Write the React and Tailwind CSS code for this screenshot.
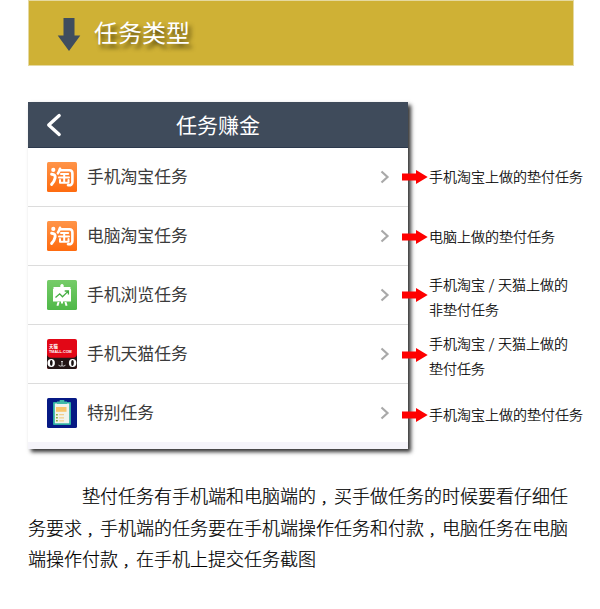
const TaobaoIcon = () => (
  <svg width="30" height="30" viewBox="0 0 30 30">
    <defs>
      <linearGradient id="orange" x1="0" y1="0" x2="0" y2="1">
        <stop offset="0" stopColor="#ff9448" />
        <stop offset="1" stopColor="#fe6b10" />
      </linearGradient>
    </defs>
    <rect width="30" height="30" rx="1.5" fill="url(#orange)" />
    <g fill="none" stroke="#fff" strokeLinecap="round" strokeLinejoin="round">
      <circle cx="6.3" cy="7.9" r="1" strokeWidth="2.2" />
      <path d="M4.6 12.2Q8.8 12.4 8.1 16Q7.4 19.6 4.6 22.4" strokeWidth="2.9" />
      <path d="M13 6.8Q12.2 9.6 10.9 11.4" strokeWidth="2.6" />
      <path d="M13 8.2H22.5Q25.4 8.2 25.4 11.5V20Q25.4 23.6 21 23.2" strokeWidth="2.6" />
      <path d="M14 11.9H21.2M12 15.4H22M17.2 11.9V20.6M13 17.9V20.8H21.5V17.9" strokeWidth="2" />
    </g>
  </svg>
);

const BrowseIcon = () => (
  <svg width="30" height="30" viewBox="0 0 30 30">
    <defs>
      <linearGradient id="green" x1="0" y1="0" x2="0" y2="1">
        <stop offset="0" stopColor="#76cc69" />
        <stop offset="1" stopColor="#4fb848" />
      </linearGradient>
    </defs>
    <rect width="30" height="30" rx="1.5" fill="url(#green)" />
    <path d="M13.3 7V5.2Q15 2.8 16.7 5.2V7H23.5V9H24V21.4H6V9H6.5V7Z" fill="#fff" />
    <path d="M11.6 22L10.4 25.8M18.4 22L19.6 25.8M15 21V23.5" stroke="#fff" strokeWidth="2" />
    <path d="M8.5 17.5L12.7 13.8L15.5 16.8L21 11.4M17.7 11H21.4V14.6" fill="none" stroke="#45ae43" strokeWidth="1.3" />
  </svg>
);

const TmallIcon = () => (
  <svg width="30" height="30" viewBox="0 0 30 30">
    <rect width="30" height="30" rx="2" fill="#e20716" />
    <path d="M0 15Q0.5 18.8 4 18.8H26Q29.5 18.8 30 15V28Q30 30 28 30H2Q0 30 0 28Z" fill="#241616" />
    <text x="2" y="9" fill="#fff" fontSize="4.4" fontWeight="700">天猫</text>
    <text x="2" y="14.2" fill="#fff" fontSize="3.8" fontWeight="700" className="font-['Liberation_Sans',sans-serif]">TMALL.COM</text>
    <ellipse cx="4.2" cy="24" rx="3.7" ry="3.9" fill="#fff" />
    <ellipse cx="25.6" cy="24" rx="3.7" ry="3.9" fill="#fff" />
    <ellipse cx="4.3" cy="24" rx="1.3" ry="3.1" fill="#181010" />
    <ellipse cx="25.5" cy="24" rx="1.3" ry="3.1" fill="#181010" />
    <path d="M14 22.5H16M15 22.5V26.8M11.5 26.2Q13.2 27.8 15 26.8Q16.8 27.8 18.5 26.2" fill="none" stroke="#ddd" strokeWidth="0.9" />
  </svg>
);

const SpecialIcon = () => (
  <svg width="30" height="30" viewBox="0 0 30 30">
    <rect width="30" height="30" rx="1.5" fill="#061984" />
    <rect x="6" y="4" width="18" height="23" rx="1" fill="#2eaea1" />
    <rect x="7.8" y="5.5" width="14.4" height="19.8" fill="#f1f3ed" />
    <path d="M10 6V3.5H12.7V2H17.3V3.5H20V6Z" fill="#40b9a7" />
    <rect x="9" y="9" width="10.5" height="4.8" fill="#f8c66c" />
    <path d="M9 16.7H10.8M9 19.8H10.8M9 22.8H10.8" stroke="#8daf38" strokeWidth="1.5" />
    <path d="M12.2 16.7H17M12.2 19.8H17M12.2 22.8H17" stroke="#f4cf8b" strokeWidth="1.3" />
  </svg>
);

const RedArrow = () => (
  <svg width="26" height="14" viewBox="0 0 26 14" className="shrink-0">
    <path d="M0 3.5H14V0L25.7 7L14 14V10.5H0Z" fill="#fe0000" />
  </svg>
);

const tasks = [
  { label: "手机淘宝任务", Icon: TaobaoIcon },
  { label: "电脑淘宝任务", Icon: TaobaoIcon },
  { label: "手机浏览任务", Icon: BrowseIcon },
  { label: "手机天猫任务", Icon: TmallIcon },
  { label: "特别任务", Icon: SpecialIcon },
];

const notes = [
  { lines: ["手机淘宝上做的垫付任务"], arrow: "pt-[22px]", text: "pt-[16px]" },
  { lines: ["电脑上做的垫付任务"], arrow: "pt-[23px]", text: "pt-[17px]" },
  { lines: ["手机淘宝 / 天猫上做的", "非垫付任务"], arrow: "pt-[22px]", text: "pt-[6px]" },
  { lines: ["手机淘宝 / 天猫上做的", "垫付任务"], arrow: "pt-[23px]", text: "pt-[6px]" },
  { lines: ["手机淘宝上做的垫付任务"], arrow: "pt-[24px]", text: "pt-[18px]" },
];

const Comma = () => <span className="pl-[5px] text-[13px] leading-none font-normal">，</span>;

export default function App() {
  return (
    <div
      lang="zh-CN"
      className="flex h-[609px] w-[600px] flex-col overflow-hidden bg-white pl-7 font-['Noto_Sans_CJK_SC',sans-serif] text-black"
    >
      <header className="flex h-[66px] w-[546px] shrink-0 items-center border border-[#e5d9a0] bg-[#cfb135] pl-7">
        <svg width="24" height="34" viewBox="0 0 24 34" className="mt-[3px]">
          <path d="M6.5 0H17.5V17.5H23.3L12 33L0.7 17.5H6.5Z" fill="#3f4d5e" />
        </svg>
        <h1 className="ml-[13px] -mt-[2px] text-2xl text-white [text-shadow:3px_4px_4px_rgba(50,40,0,0.75)]">任务类型</h1>
      </header>

      <div className="mt-9 flex shrink-0">
        <section className="h-[347px] w-[380px] shrink-0 bg-[#f5f4fa] shadow-[3px_3px_4px_rgba(0,0,0,0.8)]">
          <div className="flex h-[46px] items-center border-b border-[#2c394d] bg-[#3f4b5b]">
            <svg width="16" height="24" viewBox="0 0 16 24" className="ml-[18px]">
              <path d="M13.2 2.5L2.7 12L13.2 21.5" fill="none" stroke="#fff" strokeWidth="3.3" strokeLinecap="round" strokeLinejoin="round" />
            </svg>
            <h2 className="ml-[114px] text-[21px] text-white">任务赚金</h2>
          </div>
          {tasks.map(({ label, Icon }, i) => (
            <div
              key={label}
              className={`flex items-center bg-white pl-[19px] pr-[18px] ${i < 4 ? "h-[59px] border-b border-[#dcdcdc]" : "h-[58px]"}`}
            >
              <Icon />
              <span className="ml-[10px] flex-1 text-[16.8px] text-[#3b3b3b]">{label}</span>
              <svg width="11" height="14" viewBox="0 0 11 14">
                <path d="M2.5 1.5L8.5 7L2.5 12.5" fill="none" stroke="#a9a9a9" strokeWidth="2.2" />
              </svg>
            </div>
          ))}
        </section>

        <div className="z-10 -ml-[6px] pt-[46px]">
          {notes.map((note, i) => (
            <div key={i} className="flex h-[59px] items-start">
              <div className={note.arrow}>
                <RedArrow />
              </div>
              <div
                className={`ml-px whitespace-nowrap text-sm leading-[25px] font-light [word-spacing:0.6px] [-webkit-text-stroke:0.2px_#000] ${note.text}`}
              >
                {note.lines.map((line) => (
                  <div key={line}>{line}</div>
                ))}
              </div>
            </div>
          ))}
        </div>
      </div>

      <p className="mt-[31px] w-[541px] indent-[54px] text-lg leading-[31.5px] font-light [-webkit-text-stroke:0.2px_#000]">
        垫付任务有手机端和电脑端的<Comma />买手做任务的时候要看仔细任
        <br />
        务要求<Comma />手机端的任务要在手机端操作任务和付款<Comma />电脑任务在电脑
        <br />
        端操作付款<Comma />在手机上提交任务截图
      </p>
    </div>
  );
}
